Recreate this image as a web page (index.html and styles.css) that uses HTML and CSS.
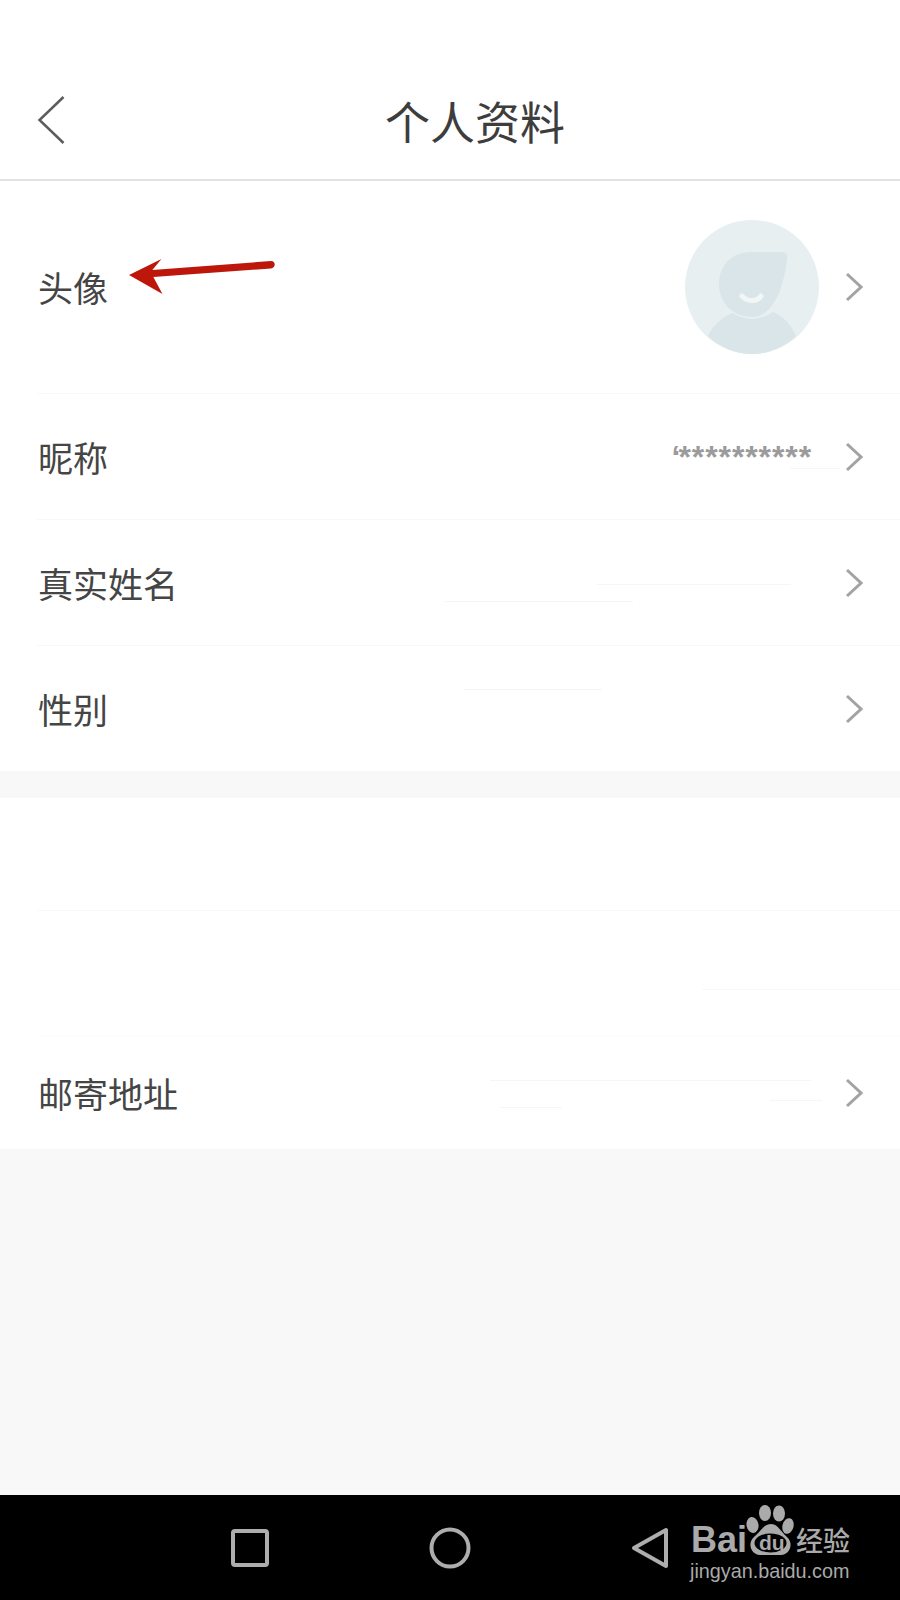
FILE: index.html
```html
<!DOCTYPE html>
<html lang="zh-CN">
<head>
<meta charset="utf-8">
<title>个人资料</title>
<link rel="stylesheet" href="styles.css">
</head>
<body>
<div class="screen">
  <header class="topbar">
    <svg class="back" viewBox="0 0 28 48" aria-hidden="true"><path d="M26 1 L2 24 L26 47"/></svg>
    <h1 class="title">个人资料</h1>
  </header>
  <main class="content">
    <section class="group">
      <div class="row row-avatar">
        <span class="label">头像</span>
        <span class="avatar-wrap">
          <svg class="avatar" viewBox="0 0 134 134" aria-hidden="true">
            <circle cx="67" cy="67" r="67" fill="#e8eff0"/>
            <path class="shape" d="M23 116 C29 103 39 96 50 92 C60 101 76 101 88 92 C98 96 106 104 111 116 C99 127 84 134 67 134 C50 134 35 127 23 116Z"/>
            <path class="shape head" d="M34 64 C34 44 48 32 66 32 L96 32 C101 32 103 35 102 40 C100 56 96 71 90 81 C84 91 76 97 67 97 C48 97 34 83 34 64Z"/>
            <path d="M57 76 C62 82 72 82 76 76" fill="none" stroke="#f2f6f6" stroke-width="5" stroke-linecap="round"/>
          </svg>
        </span>
        <svg class="chev" viewBox="0 0 18 30" aria-hidden="true"><path d="M2 2 L16 15 L2 28"/></svg>
        <svg class="arrow" viewBox="0 0 146 36" preserveAspectRatio="none" aria-hidden="true">
          <path d="M1 16 L33 0 L24 11 L141 2 C146 2 146 9 141 9.500 L25 18 L34 35Z"/>
        </svg>
      </div>
      <div class="row">
        <span class="label">昵称</span>
        <span class="value"><span class="value-mark">ʻ</span>**********</span>
        <svg class="chev" viewBox="0 0 18 30" aria-hidden="true"><path d="M2 2 L16 15 L2 28"/></svg>
        <i class="smudge s1"></i>
      </div>
      <div class="row">
        <span class="label">真实姓名</span>
        <svg class="chev" viewBox="0 0 18 30" aria-hidden="true"><path d="M2 2 L16 15 L2 28"/></svg>
        <i class="smudge s2"></i>
        <i class="smudge s3"></i>
      </div>
      <div class="row row-last">
        <span class="label">性别</span>
        <svg class="chev" viewBox="0 0 18 30" aria-hidden="true"><path d="M2 2 L16 15 L2 28"/></svg>
        <i class="smudge s4"></i>
      </div>
    </section>
    <section class="group">
      <div class="row row-first"></div>
      <div class="row row-tall">
        <i class="smudge s5"></i>
      </div>
      <div class="row row-last row-end">
        <span class="label">邮寄地址</span>
        <svg class="chev" viewBox="0 0 18 30" aria-hidden="true"><path d="M2 2 L16 15 L2 28"/></svg>
        <i class="smudge s6"></i>
        <i class="smudge s7"></i>
        <i class="smudge s8"></i>
      </div>
    </section>
  </main>
  <nav class="navbar">
    <svg class="nav-icon" viewBox="0 0 42 42" aria-hidden="true"><rect x="4" y="4" width="34" height="34" rx="2"/></svg>
    <svg class="nav-icon" viewBox="0 0 42 42" aria-hidden="true"><circle cx="21" cy="21" r="18.500"/></svg>
    <svg class="nav-icon" viewBox="0 0 42 42" aria-hidden="true"><path d="M37 3 L37 39 L5 21Z"/></svg>
  </nav>
  <div class="watermark">
    <div class="wm-top">
      <span class="wm-bai">Bai</span>
      <span class="wm-paw">
        <svg viewBox="0 0 48 50" aria-hidden="true">
          <ellipse cx="6.500" cy="20" rx="6" ry="8" transform="rotate(-10 6.500 20)"/>
          <ellipse cx="19" cy="8" rx="6" ry="8"/>
          <ellipse cx="33" cy="8.500" rx="6" ry="8"/>
          <ellipse cx="42" cy="21" rx="5.500" ry="8" transform="rotate(15 42 21)"/>
          <path d="M25 19 C32 19 35 27 41 32 C48 38 44 50 35 50 L14 50 C5 50 1 38 8 32 C14 27 18 19 25 19Z"/>
          <ellipse class="paw-hole" cx="24.500" cy="38" rx="16" ry="9.500"/>
        </svg>
        <span class="wm-du">du</span>
      </span>
      <span class="wm-cn">经验</span>
    </div>
    <div class="wm-url">jingyan.baidu.com</div>
  </div>
</div>
</body>
</html>
```
FILE: styles.css
```css
* { box-sizing: border-box; }
html, body { margin: 0; padding: 0; }
body { font-family: "Noto Sans CJK SC", "Noto Sans", sans-serif; background: #f8f8f8; }
.screen { position: relative; width: 900px; height: 1600px; display: flex; flex-direction: column; overflow: hidden; }
.topbar { height: 181px; flex: none; background: #fff; border-bottom: 2px solid #e2e2e2; display: flex; align-items: flex-start; padding: 96px 0 0 37px; }
.back { width: 29px; height: 48px; flex: none; fill: none; stroke: #5c5c5c; stroke-width: 2.500; }
.title { margin: -5px 0 0 319px; font-size: 45px; line-height: 60px; font-weight: 400; color: #3d3d3d; white-space: nowrap; }
.content { flex: 1; display: flex; flex-direction: column; gap: 27px; }
.group { background: #fff; display: flex; flex-direction: column; }
.row { position: relative; height: 126px; display: flex; align-items: center; padding: 0 37px 0 38px; }
.row::after { content: ""; position: absolute; left: 37px; right: 0; bottom: 0; height: 1px; background: #f8f8f8; }
.row-last { height: 125px; }
.row-last::after { display: none; }
.row-first { height: 113px; }
.row-tall { height: 125px; }
.row-tall::after { background: #fcfcfc; }
.row-end { height: 113px; }
.row-avatar { height: 213px; padding-bottom: 2px; }
.label { font-size: 35px; font-weight: 400; color: #454545; line-height: 46px; margin-right: auto; }
.value { font-family: "Liberation Sans", sans-serif; font-weight: 700; font-size: 32px; line-height: 46px; color: #9b9b9b; margin-right: 33px; letter-spacing: 0.900px; }
.value-mark { letter-spacing: -2px; }
.avatar-wrap { display: flex; flex: none; margin-right: 26px; }
.avatar { width: 134px; height: 134px; flex: none; }
.shape { fill: #d9e5e8; }
.head { stroke: #e8eff0; stroke-width: 3; paint-order: stroke; }
.chev { width: 18px; height: 30px; flex: none; fill: none; stroke: #a3a3a3; stroke-width: 3; }
.arrow { position: absolute; left: 128px; top: 78px; width: 148px; height: 36px; fill: #bd170c; }
.smudge { position: absolute; height: 1px; background: #f6f6f6; }
.s1 { left: 790px; width: 50px; top: 74px; }
.s2 { left: 597px; width: 194px; top: 64px; }
.s3 { left: 444px; width: 189px; top: 81px; }
.s4 { left: 464px; width: 138px; top: 43px; }
.s5 { left: 702px; width: 198px; top: 78px; background: #f8f8f8; }
.s6 { left: 490px; width: 321px; top: 44px; }
.s7 { left: 500px; width: 62px; top: 71px; }
.s8 { left: 770px; width: 52px; top: 64px; }
.navbar { height: 105px; flex: none; background: #000; display: flex; justify-content: center; align-items: center; gap: 158px; }
.nav-icon { width: 42px; height: 42px; flex: none; fill: none; stroke: #adadad; stroke-width: 4; stroke-linejoin: round; }
.watermark { position: absolute; left: 690px; top: 1505px; width: 162px; color: #aaa; }
.wm-top { display: flex; align-items: flex-end; height: 50px; }
.wm-bai { font-family: "Liberation Sans", sans-serif; font-weight: 700; font-size: 36px; line-height: 30px; margin-left: 1px; }
.wm-paw { position: relative; width: 48px; height: 50px; flex: none; margin-left: -1px; margin-right: 2px; }
.wm-paw svg { display: block; width: 48px; height: 50px; fill: #aaa; }
.paw-hole { fill: #000; }
.wm-du { position: absolute; left: 13px; top: 26px; font-family: "Liberation Sans", sans-serif; font-weight: 700; font-size: 21px; line-height: 24px; color: #aaa; }
.wm-cn { font-size: 27px; line-height: 30px; font-weight: 500; white-space: nowrap; }
.wm-url { font-family: "Liberation Sans", sans-serif; font-size: 19.800px; line-height: 24px; margin-top: 4px; white-space: nowrap; }
```
